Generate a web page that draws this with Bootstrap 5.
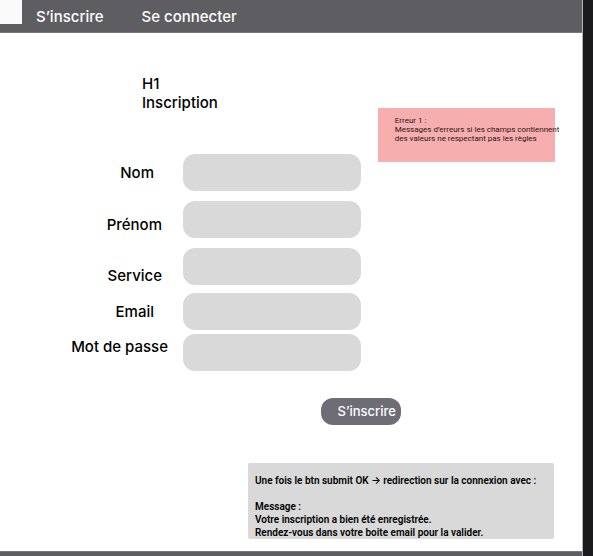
<!DOCTYPE html>
<html lang="fr">
<head>
<meta charset="utf-8">
<meta name="viewport" content="width=device-width, initial-scale=1">
<title>Inscription</title>
<link href="https://cdn.jsdelivr.net/npm/bootstrap@5.3.0/dist/css/bootstrap.min.css" rel="stylesheet">
<style>
  body { font-family: Inter, "Liberation Sans", sans-serif; font-size: 15px; line-height: 18px; font-weight: 500; color: #000; background: #1b1b1d; padding-right: 10px; }
  .sheet { background: #fff; border-right: 1px solid #b4b4b6; }
  .topbar { background: #5e5d62; border-bottom: 1px solid #77767b; height: 33px; }
  .logo-box { width: 22px; height: 24px; background: #fafafa; }
  .topbar .nav-link { color: #fff; line-height: 18px; }
  .links { gap: 38px; padding-left: 14px; padding-top: 8px; }
  .upper { padding-top: 41px; padding-right: 27px; gap: 17px; }
  .form-side { flex: 0 0 65%; min-width: 0; }
  .title { font-size: 15px; line-height: 19px; font-weight: 500; padding-left: 142px; margin-bottom: 42px; }
  .field-label { flex: 0 0 183px; }
  .field { flex: 1 1 0; border-radius: 12px; background: #d9d9d9; height: 37px; min-width: 0; }
  .row-gap-wide { margin-bottom: 10px; }
  .near { padding-right: 15px; }
  .mid { padding-right: 21px; }
  .far { padding-right: 29px; }
  .error-box { flex: 1 1 0; min-width: 0; background: #f7aeae; color: #2b1517; font-family: Roboto, Inter, sans-serif; font-size: 8px; line-height: 9px; font-weight: 400; padding: 8px 0 19px 17px; margin-top: 34px; white-space: nowrap; }
  .lower { padding-right: 28px; }
  .submit { background: #6e6d75; color: #fff; border-radius: 12px; font-size: 13px; line-height: 17px; font-weight: 500; padding: 5px 5px 5px 17px; margin: 27px 153px 38px 0; }
  .submit:hover { background: #5e5d62; color: #fff; }
  .note { background: #d9d9d9; border-radius: 2px; width: 306px; font-family: Roboto, Inter, sans-serif; font-size: 10px; line-height: 13px; font-weight: 600; padding: 11px 7px 0; }
  .bottombar { background: #5e5d62; border-top: 1px solid #77767b; height: 5px; margin-top: 12px; }
</style>
<script src="https://cdn.jsdelivr.net/npm/bootstrap@5.3.0/dist/js/bootstrap.bundle.min.js"></script>
</head>
<body>
<div class="sheet">
  <header class="topbar d-flex align-items-start">
    <div class="logo-box"></div>
    <nav class="links d-flex" aria-label="Navigation principale">
      <a class="nav-link p-0" href="#inscription">S’inscrire</a>
      <a class="nav-link p-0" href="#connexion">Se connecter</a>
    </nav>
  </header>
  <main>
    <div class="upper d-flex align-items-start">
      <div class="form-side">
        <h1 class="title">H1<br>Inscription</h1>
        <form id="inscription">
          <div class="d-flex align-items-center row-gap-wide">
            <label class="field-label far text-end" for="nom">Nom</label>
            <input class="field form-control border-0" id="nom" type="text">
          </div>
          <div class="d-flex align-items-end row-gap-wide">
            <label class="field-label mid text-end pb-1" for="prenom">Prénom</label>
            <input class="field form-control border-0" id="prenom" type="text">
          </div>
          <div class="d-flex align-items-end mb-2">
            <label class="field-label mid text-end" for="service">Service</label>
            <input class="field form-control border-0" id="service" type="text">
          </div>
          <div class="d-flex align-items-center mb-1">
            <label class="field-label far text-end" for="email">Email</label>
            <input class="field form-control border-0" id="email" type="email">
          </div>
          <div class="d-flex align-items-start">
            <label class="field-label near text-end pt-1" for="passe">Mot de passe</label>
            <input class="field form-control border-0" id="passe" type="password">
          </div>
        </form>
      </div>
      <div class="error-box" role="alert">Erreur 1 :<br>Messages d’erreurs si les champs contiennent<br>des valeurs ne respectant pas les règles</div>
    </div>
    <div class="lower d-flex flex-column align-items-end">
      <button class="submit btn border-0" type="submit" form="inscription">S’inscrire</button>
      <div class="note">
        <p class="mb-0">Une fois le btn submit OK → redirection sur la connexion avec :</p>
        <br>
        <p class="mb-0">Message :<br>Votre inscription a bien été enregistrée.<br>Rendez-vous dans votre boite email pour la valider.</p>
      </div>
    </div>
  </main>
  <footer class="bottombar"></footer>
</div>
</body>
</html>
